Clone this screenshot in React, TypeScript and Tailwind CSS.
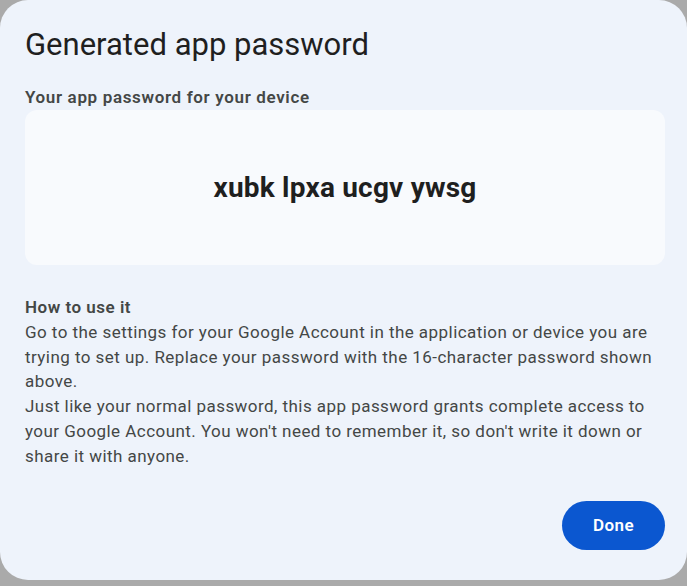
import React from "react";

function App() {
  return (
    <div className="w-[687px] h-[586px] bg-[#aaaaaa] overflow-hidden" style={{ fontFamily: "Roboto, 'Noto Sans', sans-serif" }}>
      <div className="w-[687px] h-[580px] bg-[#eef3fb] rounded-[28px] pl-[25px] pr-[22px] pt-[25px] flex flex-col">
        <h1 className="text-[31px] leading-[40px] text-[#1f1f1f] font-normal">
          Generated app password
        </h1>

        <div className="mt-[20px] text-[17px] leading-[24px] font-semibold tracking-[0.65px] text-[#444746]">
          Your app password for your device
        </div>

        <div className="mt-[1px] h-[155px] w-[640px] bg-[#f8fafd] rounded-[12px] flex items-center justify-center">
          <span className="text-[28px] font-bold text-[#1f1f1f] tracking-[0.2px]">
            xubk lpxa ucgv ywsg
          </span>
        </div>

        <div className="mt-[30px] text-[17px] leading-[24.8px] tracking-[0.45px] text-[#444746] whitespace-nowrap">
          <div className="font-semibold tracking-[0.5px]">How to use it</div>
          <p>
            Go to the settings for your Google Account in the application or device you are
            <br />
            trying to set up. Replace your password with the 16-character password shown
            <br />
            above.
          </p>
          <p>
            Just like your normal password, this app password grants complete access to
            <br />
            your Google Account. You won't need to remember it, so don't write it down or
            <br />
            share it with anyone.
          </p>
        </div>

        <div className="mt-auto mb-[30px] flex justify-end">
          <button className="w-[103px] h-[49px] rounded-full bg-[#0b57d0] text-white text-[17px] font-semibold tracking-[0.4px]">
            Done
          </button>
        </div>
      </div>
    </div>
  );
}

export default App;
